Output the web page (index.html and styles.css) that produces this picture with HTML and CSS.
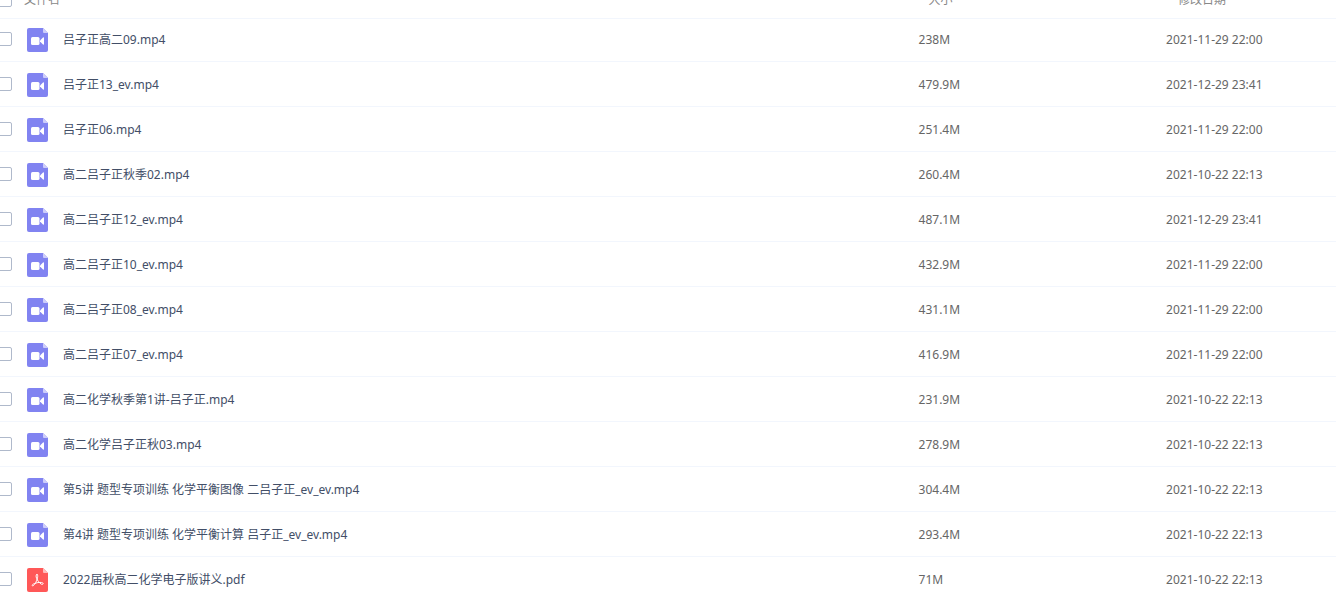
FILE: index.html
```
<!DOCTYPE html>
<html lang="zh-CN">
  <head>
    <meta charset="utf-8" />
    <meta name="viewport" content="width=device-width, initial-scale=1" />
    <title>文件列表</title>
    <link rel="stylesheet" href="styles.css">
  </head>
  <body>
    <svg width="0" height="0" class="sprite" aria-hidden="true">
      <symbol id="icon-video" viewBox="0 0 21 24">
        <path fill="#8183f1" d="M2 0h14l5 5v17a2 2 0 0 1-2 2H2a2 2 0 0 1-2-2V2a2 2 0 0 1 2-2z" />
        <path fill="#cdcdfa" d="M16 0l5 5h-4a1 1 0 0 1-1-1z" />
        <rect x="4" y="9" width="8.500" height="8" rx="1.500" fill="#fff" />
        <path fill="#fff" d="M13 12.500l3-3q1-.5 1 .5v6q0 1-1 .5l-3-3z" />
      </symbol>
      <symbol id="icon-pdf" viewBox="0 0 21 24">
        <path fill="#ff5858" d="M2 0h14l5 5v17a2 2 0 0 1-2 2H2a2 2 0 0 1-2-2V2a2 2 0 0 1 2-2z" />
        <path fill="#ffbcbc" d="M16 0l5 5h-4a1 1 0 0 1-1-1z" />
        <path fill="none" stroke="#fff" stroke-linejoin="round" stroke-linecap="round" d="M10 6.500c-1.200 0-1.200 2-.4 3.800 1 2.300 2.500 4.500 4.600 5.800 1 .6 2 .2 2-.5 0-1.100-2.600-1.500-5.400-1-2.400.4-4.600 1.300-5.400 2.200-.6.800.1 1.500.9.900 1.700-1.300 3.500-4.700 4.200-7.900.4-1.900.3-3.300-.5-3.300z" />
      </symbol>
    </svg>
    <main>
      <table class="file-table">
        <thead>
          <tr>
            <th class="col-check"><input type="checkbox" aria-label="全选" /></th>
            <th class="col-name">文件名</th>
            <th class="col-size">大小</th>
            <th class="col-date">修改日期</th>
          </tr>
        </thead>
        <tbody id="file-list"></tbody>
      </table>
    </main>
    <script type="text/javascript">
      const files = [
        ["吕子正高二09.mp4", "238M", "2021-11-29 22:00"],
        ["吕子正13_ev.mp4", "479.9M", "2021-12-29 23:41"],
        ["吕子正06.mp4", "251.4M", "2021-11-29 22:00"],
        ["高二吕子正秋季02.mp4", "260.4M", "2021-10-22 22:13"],
        ["高二吕子正12_ev.mp4", "487.1M", "2021-12-29 23:41"],
        ["高二吕子正10_ev.mp4", "432.9M", "2021-11-29 22:00"],
        ["高二吕子正08_ev.mp4", "431.1M", "2021-11-29 22:00"],
        ["高二吕子正07_ev.mp4", "416.9M", "2021-11-29 22:00"],
        ["高二化学秋季第1讲-吕子正.mp4", "231.9M", "2021-10-22 22:13"],
        ["高二化学吕子正秋03.mp4", "278.9M", "2021-10-22 22:13"],
        ["第5讲 题型专项训练 化学平衡图像 二吕子正_ev_ev.mp4", "304.4M", "2021-10-22 22:13"],
        ["第4讲 题型专项训练 化学平衡计算 吕子正_ev_ev.mp4", "293.4M", "2021-10-22 22:13"],
        ["2022届秋高二化学电子版讲义.pdf", "71M", "2021-10-22 22:13"],
      ];

      function renderRow([name, size, date]) {
        const icon = name.endsWith(".pdf") ? "icon-pdf" : "icon-video";
        return `
          <tr>
            <td class="col-check"><input type="checkbox" aria-label="${name}" /></td>
            <td class="col-name">
              <div class="file">
                <svg class="file-icon" aria-hidden="true"><use href="#${icon}" /></svg>
                <a class="file-link" href="#">${name}</a>
              </div>
            </td>
            <td class="col-size">${size}</td>
            <td class="col-date">${date}</td>
          </tr>`;
      }

      document.getElementById("file-list").innerHTML = files.map(renderRow).join("");
    </script>
  </body>
</html>
```
FILE: styles.css
```
* {
  box-sizing: border-box;
}
body {
  margin: 0;
  overflow: hidden;
  background: #fff;
  color: #666;
  font-family: "Noto Sans", "Noto Sans CJK SC", sans-serif;
  font-size: 12px;
  line-height: 18px;
}
.sprite {
  display: block;
}
/* the list is scrolled: its header is partly above the window */
main {
  margin-top: -19px;
  margin-left: -2px;
}
.file-table {
  width: 100%;
  table-layout: fixed;
  border-collapse: separate;
  border-spacing: 0;
}
.file-table th,
.file-table td {
  height: 45px;
  padding: 0;
  text-align: left;
  vertical-align: middle;
  border-bottom: 1px solid #f2f6fd;
}
.file-table td {
  padding-top: 2px;
}
.file-table td.col-check {
  padding-top: 0;
}
.file-table th {
  height: 38px;
  color: #888;
  font-weight: normal;
}
.file-table tbody tr:first-child td {
  height: 43px;
  padding-top: 0;
}
.file-table tbody tr:first-child td.col-check {
  padding-bottom: 2px;
}
.file-table .col-check {
  width: 26px;
}
.file-table .col-size {
  width: 18.5%;
}
.file-table .col-date {
  width: 12.7%;
}
.file-table th.col-size {
  padding-left: 10px;
}
.file-table th.col-date {
  padding-left: 12px;
}
.file-table input {
  appearance: none;
  display: block;
  width: 14px;
  height: 14px;
  margin: 0;
  background: #fff;
  border: 1px solid #afb9cb;
  border-radius: 2px;
}
.file {
  display: flex;
  align-items: center;
  gap: 15px;
  padding-left: 3px;
}
.file-icon {
  flex: none;
  width: 21px;
  height: 24px;
}
.file-link {
  color: #424e67;
  text-decoration: none;
}
.file-link:hover {
  color: #06a7ff;
}
```
